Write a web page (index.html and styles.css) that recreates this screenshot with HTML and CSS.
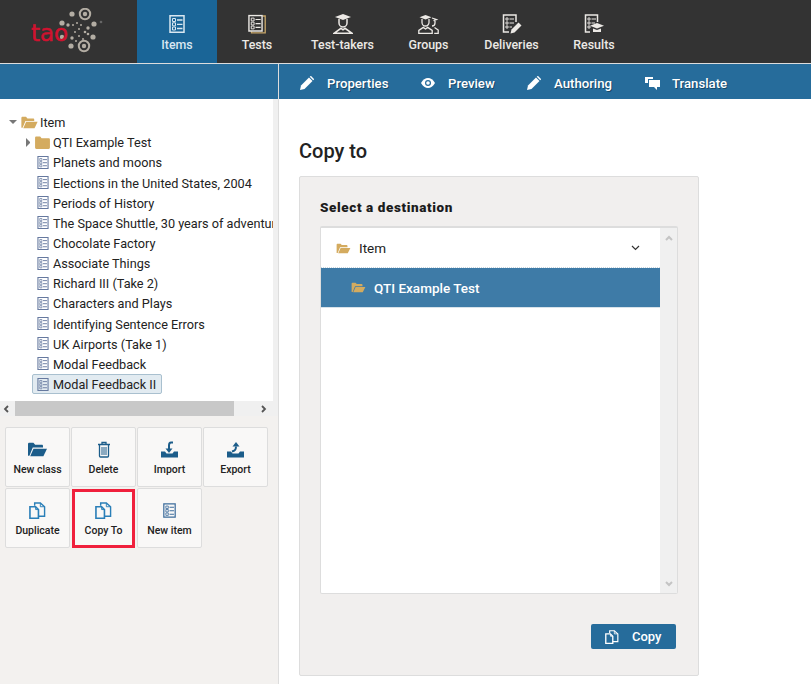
FILE: index.html
```html
<!DOCTYPE html>
<html>
<head>
    <meta charset="UTF-8">
    <meta name="viewport" content="width=device-width, initial-scale=1.0">
    <title>TAO - Copy to</title>
    <link rel="stylesheet" href="styles.css">
</head>
<body>
    <svg class="defs" width="0" height="0">
        <symbol id="i-item" viewBox="0 0 16 18">
            <path d="M1 .8h14v16.400H1z" fill="none" stroke="currentColor" stroke-width="1.500"/>
            <path d="M3.500 3.500h3v3h-3zM3.500 7.800h3v3h-3zM3.500 12h3v3h-3z" fill="none" stroke="currentColor"/>
            <path d="M8 5h5.500M8 9.300h5.500M8 13.500h5.500" stroke="currentColor" stroke-width="1.300"/>
        </symbol>
        <symbol id="i-open" viewBox="0 0 20 16">
            <path d="M0 2.500C0 1.500.7 1 1.500 1h4.200l1.800 2h7c.8 0 1.300.5 1.300 1.300V6H5L1.500 14.500H0z" fill="currentColor"/>
            <path d="M5.800 7.200H20l-3.800 7.800H2.300z" fill="currentColor"/>
        </symbol>
        <symbol id="i-folder" viewBox="0 0 16 14">
            <path d="M0 2c0-1 .6-1.500 1.500-1.500h4L7 2.500h7.500c1 0 1.500.5 1.500 1.500v8.500c0 1-.5 1.500-1.500 1.500h-13C.5 14 0 13.500 0 12.500z" fill="currentColor"/>
        </symbol>
        <symbol id="i-copy" viewBox="0 0 18 18">
            <path d="M1 5h6l3 3v9.200H1z" fill="none" stroke="currentColor" stroke-width="1.700"/>
            <path d="M7 5v3h3" fill="none" stroke="currentColor"/>
            <path d="M6 4V1h6l4.500 4v10H10" fill="none" stroke="currentColor" stroke-width="1.500"/>
            <path d="M12 1v4h4" fill="none" stroke="currentColor"/>
        </symbol>
        <symbol id="i-pencil" viewBox="0 0 14 14">
            <path d="M0 14l1-4.500L9 1.500l3.500 3.500L4.500 13z" fill="currentColor"/>
            <path d="M10.300.3l3.400 3.400" stroke="currentColor" stroke-width="1.500"/>
        </symbol>
    </svg>

    <header class="topbar">
        <a class="logo">
            <svg width="84" height="50" viewBox="0 0 84 50">
                <g fill="#b3ada3">
                    <circle cx="45" cy="6" r="2.600"/>
                    <circle cx="35" cy="15" r="2.600"/>
                    <circle cx="67" cy="16" r="2.600"/>
                    <circle cx="66" cy="29" r="2.600"/>
                    <circle cx="44" cy="38" r="2.600"/>
                    <circle cx="41" cy="17" r="1.700"/>
                    <circle cx="45" cy="30" r="1.700"/>
                    <circle cx="61" cy="20" r="1.700"/>
                    <circle cx="58" cy="24" r="1.300"/>
                    <circle cx="61" cy="26" r="1.300"/>
                    <circle cx="35" cy="29" r="2.200"/>
                    <circle cx="46" cy="17" r="1"/>
                    <circle cx="50" cy="15" r="1"/>
                    <circle cx="54" cy="17" r="1"/>
                    <circle cx="48" cy="24" r="1"/>
                    <circle cx="52" cy="21" r="1"/>
                    <circle cx="52" cy="28" r="1"/>
                    <circle cx="56" cy="31" r="1"/>
                    <circle cx="49" cy="33" r="1"/>
                    <circle cx="74" cy="14" r="1.300" fill="#666"/>
                </g>
                <g fill="none" stroke="#b3ada3" stroke-width="2">
                    <circle cx="58" cy="6" r="5.200"/>
                    <circle cx="57" cy="38" r="5.200"/>
                </g>
                <circle cx="58" cy="6" r="2.200" fill="#b3ada3"/>
                <circle cx="57" cy="38" r="2.200" fill="#b3ada3"/>
            </svg>
            <span class="logo-text">tao</span>
        </a>
        <nav class="main-nav">
            <a class="nav-tab active tab-items">
                <svg width="16" height="20" viewBox="0 0 16 18"><use href="#i-item"/></svg>
                <span>Items</span>
            </a>
            <a class="nav-tab tab-tests">
                <svg width="18" height="20" viewBox="0 0 18 19"><path d="M14.500 1.500H17.200V18.300H3.500v-1.500" fill="none" stroke="#c9a86a" stroke-width="1.300"/><use href="#i-item" width="15" height="17.500"/></svg>
                <span>Tests</span>
            </a>
            <a class="nav-tab tab-takers">
                <svg width="20" height="20" viewBox="0 0 20 20"><path d="M10 0l8 3-8 3-8-3z" fill="currentColor"/><path d="M6 5v4a4 4 0 0 0 8 0V5" fill="none" stroke="currentColor" stroke-width="1.500"/><path d="M1 19.300l7-5 2 1.500 2-1.500 7 5z" fill="none" stroke="currentColor" stroke-width="1.500"/></svg>
                <span>Test-takers</span>
            </a>
            <a class="nav-tab tab-groups">
                <svg width="21" height="20" viewBox="0 0 21 20"><path d="M7.500 1l6 2.300-6 2.300-6-2.300z" fill="currentColor"/><path d="M4 5v3.500a3.500 3.500 0 0 0 7 0V5" fill="none" stroke="currentColor" stroke-width="1.300"/><path d="M.8 19.400v-3l4.500-3 2.200 1.600 2.200-1.600 4.500 3v3z" fill="none" stroke="currentColor" stroke-width="1.300"/><path d="M14 4l4.500 1.500-3 1.200M17 7v2a3 3 0 0 1-3 3M16.500 13.500l3.700 2.500v3.400h-4" fill="none" stroke="currentColor" stroke-width="1.300"/></svg>
                <span>Groups</span>
            </a>
            <a class="nav-tab tab-deliveries">
                <svg width="20" height="20" viewBox="0 0 20 20"><path d="M14 8V1H1.500v17H7" fill="none" stroke="currentColor" stroke-width="1.500"/><path d="M4 4h2v2H4zM4 8h2v2H4zM4 12h2v2H4z" fill="none" stroke="currentColor" stroke-width=".9"/><path d="M7.500 5H12M7.500 9H12M7.500 13H10" stroke="currentColor"/><path d="M8.500 19.500l1-4 7-7 3 3-7 7z" fill="currentColor"/></svg>
                <span>Deliveries</span>
            </a>
            <a class="nav-tab tab-results">
                <svg width="20" height="20" viewBox="0 0 20 20"><path d="M13.500 8V1H1.500v17H6" fill="none" stroke="currentColor" stroke-width="1.500"/><path d="M4 4h2v2H4zM4 8h2v2H4zM4 12h2v2H4z" fill="none" stroke="currentColor" stroke-width=".9"/><path d="M7.500 5H12M7.500 9H11" stroke="currentColor"/><path d="M13 9l7 2.800-7 2.800-7-2.800z" fill="currentColor"/><path d="M9 14.500v3.500h8v-3.500l-4 1.500z" fill="currentColor"/></svg>
                <span>Results</span>
            </a>
        </nav>
    </header>

    <div class="action-bar">
        <div class="action-spacer"></div>
        <nav class="action-tabs">
            <a class="action-tab tab-properties"><svg width="14" height="14"><use href="#i-pencil"/></svg><span>Properties</span></a>
            <a class="action-tab tab-preview">
                <svg width="14" height="10" viewBox="0 0 14 10"><path d="M0 5c2-3.200 4.300-5 7-5s5 1.800 7 5c-2 3.200-4.300 5-7 5S2 8.200 0 5z" fill="currentColor"/><circle cx="7" cy="5" r="3" fill="#266c9b"/><circle cx="7" cy="5" r="1.800" fill="currentColor"/></svg>
                <span>Preview</span>
            </a>
            <a class="action-tab tab-authoring"><svg width="14" height="14"><use href="#i-pencil"/></svg><span>Authoring</span></a>
            <a class="action-tab tab-translate">
                <svg width="15" height="13" viewBox="0 0 15 13"><path d="M0 0h8v2H3v4H0z" fill="currentColor"/><path d="M4 3h11v7h-3v3l-3-3H4z" fill="currentColor"/></svg>
                <span>Translate</span>
            </a>
        </nav>
    </div>

    <div class="workspace">
        <aside class="sidebar">
            <div class="tree-wrap">
                <ul class="tree">
                    <li class="tree-row root">
                        <span class="caret caret-down"></span>
                        <svg class="folder-open" width="17" height="13"><use href="#i-open"/></svg>
                        <span>Item</span>
                    </li>
                    <li class="tree-row sub">
                        <span class="caret caret-right"></span>
                        <svg class="folder" width="15" height="13"><use href="#i-folder"/></svg>
                        <span>QTI Example Test</span>
                    </li>
                    <li class="tree-row leaf"><svg class="item-icon" width="12" height="13"><use href="#i-item"/></svg><span>Planets and moons</span></li>
                    <li class="tree-row leaf"><svg class="item-icon" width="12" height="13"><use href="#i-item"/></svg><span>Elections in the United States, 2004</span></li>
                    <li class="tree-row leaf"><svg class="item-icon" width="12" height="13"><use href="#i-item"/></svg><span>Periods of History</span></li>
                    <li class="tree-row leaf"><svg class="item-icon" width="12" height="13"><use href="#i-item"/></svg><span>The Space Shuttle, 30 years of adventure</span></li>
                    <li class="tree-row leaf"><svg class="item-icon" width="12" height="13"><use href="#i-item"/></svg><span>Chocolate Factory</span></li>
                    <li class="tree-row leaf"><svg class="item-icon" width="12" height="13"><use href="#i-item"/></svg><span>Associate Things</span></li>
                    <li class="tree-row leaf"><svg class="item-icon" width="12" height="13"><use href="#i-item"/></svg><span>Richard III (Take 2)</span></li>
                    <li class="tree-row leaf"><svg class="item-icon" width="12" height="13"><use href="#i-item"/></svg><span>Characters and Plays</span></li>
                    <li class="tree-row leaf"><svg class="item-icon" width="12" height="13"><use href="#i-item"/></svg><span>Identifying Sentence Errors</span></li>
                    <li class="tree-row leaf"><svg class="item-icon" width="12" height="13"><use href="#i-item"/></svg><span>UK Airports (Take 1)</span></li>
                    <li class="tree-row leaf"><svg class="item-icon" width="12" height="13"><use href="#i-item"/></svg><span>Modal Feedback</span></li>
                    <li class="tree-row leaf selected"><svg class="item-icon" width="12" height="13"><use href="#i-item"/></svg><span>Modal Feedback II</span></li>
                </ul>
                <div class="v-scroll"></div>
            </div>
            <div class="h-scroll">
                <svg width="6" height="8" viewBox="0 0 6 8"><path d="M5 1L2 4l3 3" fill="none" stroke="#555" stroke-width="1.800"/></svg>
                <div class="h-thumb"></div>
                <svg width="6" height="8" viewBox="0 0 6 8"><path d="M1 1l3 3-3 3" fill="none" stroke="#555" stroke-width="1.800"/></svg>
            </div>
            <div class="tool-grid">
                <button class="tool-btn">
                    <svg width="19" height="15" class="tool-dark"><use href="#i-open"/></svg>
                    <span>New class</span>
                </button>
                <button class="tool-btn">
                    <svg width="14" height="16" viewBox="0 0 14 16" class="tool-dark"><path d="M1 3h12M5 3V1h4v2M2.500 3v11.500a1 1 0 0 0 1 1h7a1 1 0 0 0 1-1V3" fill="none" stroke="currentColor" stroke-width="1.300"/><path d="M5 5.500v8M7 5.500v8M9 5.500v8" stroke="currentColor"/></svg>
                    <span>Delete</span>
                </button>
                <button class="tool-btn">
                    <svg width="17" height="16" viewBox="0 0 17 16" class="tool-dark"><path d="M0 10h4l1.500 2h6L13 10h4v6H0z" fill="currentColor"/><path d="M12 1H10C8.500 1 8 2 8 4v4" fill="none" stroke="currentColor" stroke-width="2"/><path d="M4.500 7h7L8 11.500z" fill="currentColor"/></svg>
                    <span>Import</span>
                </button>
                <button class="tool-btn">
                    <svg width="17" height="16" viewBox="0 0 17 16" class="tool-dark"><path d="M0 10h4l1.500 2h6L13 10h4v6H0z" fill="currentColor"/><path d="M5 10c2-.5 4-1 4-5" fill="none" stroke="currentColor" stroke-width="2"/><path d="M5.500 5h7L9 .5z" fill="currentColor"/></svg>
                    <span>Export</span>
                </button>
                <button class="tool-btn">
                    <svg width="17" height="17" class="tool-blue"><use href="#i-copy"/></svg>
                    <span>Duplicate</span>
                </button>
                <button class="tool-btn marked">
                    <svg width="17" height="17" class="tool-blue"><use href="#i-copy"/></svg>
                    <span>Copy To</span>
                </button>
                <button class="tool-btn">
                    <svg width="13" height="15" class="tool-slate"><use href="#i-item"/></svg>
                    <span>New item</span>
                </button>
            </div>
        </aside>

        <main class="content">
            <h1>Copy to</h1>
            <section class="panel">
                <h2>Select a destination</h2>
                <div class="dest-box">
                    <div class="dest-list">
                        <div class="dest-row">
                            <svg class="folder-open" width="15" height="11"><use href="#i-open"/></svg>
                            <span>Item</span>
                            <svg class="chevron" width="9" height="6" viewBox="0 0 9 6"><path d="M1 1l3.500 3.500L8 1" fill="none" stroke="#333" stroke-width="1.200"/></svg>
                        </div>
                        <div class="dest-row child">
                            <svg class="folder-open" width="15" height="11"><use href="#i-open"/></svg>
                            <span>QTI Example Test</span>
                        </div>
                    </div>
                    <div class="dest-scroll">
                        <svg width="8" height="6" viewBox="0 0 8 6"><path d="M1 5l3-3 3 3" fill="none" stroke="#c4c4c4" stroke-width="2"/></svg>
                        <svg width="8" height="6" viewBox="0 0 8 6"><path d="M1 1l3 3 3-3" fill="none" stroke="#c4c4c4" stroke-width="2"/></svg>
                    </div>
                </div>
                <div class="panel-foot">
                    <button class="copy-btn">
                        <svg width="14" height="14"><use href="#i-copy"/></svg>
                        <span>Copy</span>
                    </button>
                </div>
            </section>
        </main>
    </div>
</body>
</html>
```

FILE: styles.css
```css
* {
    box-sizing: border-box;
}

html, body {
    height: 100%;
}

body {
    margin: 0;
    height: 684px;
    overflow: hidden;
    font-family: Roboto, "Liberation Sans", Arial, sans-serif;
    color: #222;
    background-color: #fff;
}

.defs {
    display: block;
    height: 0;
}

/* top navigation */
.topbar {
    display: flex;
    height: 64px;
    background-color: #333;
    border-bottom: 1px solid #ddd;
}

.logo {
    position: relative;
    width: 137px;
    padding: 8px 0 0 27px;
}

.logo svg {
    display: block;
}

.logo-text {
    position: absolute;
    left: 31px;
    top: 18px;
    font-family: "DejaVu Sans", sans-serif;
    font-size: 23px;
    line-height: 30px;
    color: #d0122f;
    -webkit-text-stroke: .5px #d0122f;
}

.main-nav {
    display: flex;
}

.nav-tab {
    display: flex;
    flex-direction: column;
    align-items: center;
    height: 63px;
    padding-top: 14px;
    color: #ece9e5;
    font-size: 12.400px;
    font-weight: 500;
}

.nav-tab svg {
    display: block;
    height: 20px;
}

.nav-tab span {
    margin-top: 3px;
    line-height: 16px;
}

.nav-tab.active {
    background-color: #1a6597;
    color: #d9e7f1;
}

.tab-items { width: 80px; }
.tab-tests { width: 80px; }
.tab-takers { width: 91px; }
.tab-groups { width: 81px; }
.tab-deliveries { width: 85px; }
.tab-results { width: 80px; }

/* secondary actions */
.action-bar {
    display: flex;
    height: 35px;
    background-color: #266c9b;
}

.action-spacer {
    width: 279px;
    border-right: 1px solid #ddd;
}

.action-tabs {
    display: flex;
    padding-left: 21px;
}

.action-tab {
    display: flex;
    align-items: center;
    padding-top: 3px;
    color: #fff;
    font-size: 13.200px;
    font-weight: 500;
    text-shadow: 1px 1px 0 rgba(0, 0, 0, .35);
}

.action-tab svg {
    flex: none;
}

.tab-properties { width: 121px; }
.tab-properties svg { margin-right: 13px; }
.tab-preview { width: 106px; }
.tab-preview svg { margin-right: 13px; }
.tab-authoring { width: 118px; }
.tab-authoring svg { margin-right: 13px; }
.tab-translate svg { margin-right: 12px; }

/* main area */
.workspace {
    display: flex;
    height: 585px;
}

.sidebar {
    flex: none;
    width: 279px;
    background-color: #f3f1ef;
    border-right: 1px solid #ddd;
}

.tree-wrap {
    display: flex;
    height: 302px;
    background-color: #fff;
}

.tree {
    flex: 1;
    min-width: 0;
    margin: 0;
    padding: 13px 0 0;
    list-style: none;
    overflow: hidden;
}

.v-scroll {
    flex: none;
    width: 5px;
    background-color: #f0f0f0;
}

.tree-row {
    display: flex;
    align-items: center;
    height: 20.170px;
    font-size: 12.700px;
    white-space: nowrap;
}

.tree-row span {
    padding-top: 1px;
}

.root {
    padding-left: 9px;
}

.root span:last-child {
    margin-left: 2px;
}

.sub {
    padding-left: 26px;
}

.sub svg {
    margin: 0 3px 0 5px;
}

.leaf {
    padding-left: 37px;
}

.leaf svg {
    margin-right: 4px;
    flex: none;
}

.selected {
    width: 130px;
    margin-left: 32px;
    padding-left: 4px;
    background-color: #e2ebf1;
    border: 1px solid #a9c0cf;
    border-radius: 2px;
}

.caret {
    display: block;
    padding: 0;
    width: 0;
    height: 0;
    border-style: solid;
    border-color: transparent;
}

.caret-down {
    margin-right: 4px;
    border-width: 4px 4px 0;
    border-top-color: #777;
}

.caret-right {
    border-width: 4px 0 4px 4px;
    border-left-color: #777;
}

.folder-open, .folder {
    color: #d4ab5f;
    flex: none;
}

.item-icon {
    color: #66799f;
}

.h-scroll {
    display: flex;
    align-items: center;
    height: 15px;
    padding: 0 10px 0 3px;
    background-color: #f0f0f0;
}

.h-thumb {
    width: 219px;
    height: 15px;
    margin: 0 27px 0 6px;
    background-color: #c8c8c8;
}

.tool-grid {
    display: grid;
    grid-template-columns: repeat(4, 65px);
    grid-auto-rows: 60px;
    gap: 1px;
    padding: 11px 0 0 5px;
}

.tool-btn {
    display: flex;
    flex-direction: column;
    align-items: center;
    padding: 13px 0 0;
    background-color: #f9f8f7;
    border: 1px solid #ddd;
    border-radius: 2px;
    font-family: inherit;
    font-size: 10.500px;
    font-weight: 500;
    color: #222;
}

.tool-btn svg {
    display: block;
    height: 17px;
}

.tool-btn span {
    margin-top: 5px;
    line-height: 14px;
}

.tool-btn.marked {
    padding-top: 10px;
    border: 3px solid #f0203c;
    border-radius: 0;
    margin: 1px 1px 0;
}

.tool-dark { color: #1c5d8a; }
.tool-blue { color: #2a7fb8; }
.tool-slate { color: #3d6c9c; }

/* copy panel */
.content {
    flex: 1;
    padding: 40px 0 0 20px;
}

.content h1 {
    margin: 0;
    font-size: 20px;
    font-weight: 500;
    line-height: 24px;
    color: #222;
}

.panel {
    width: 400px;
    height: 500px;
    margin-top: 13px;
    padding: 20px 21px 0 20px;
    background-color: #f1efee;
    border: 1px solid #ddd;
    border-radius: 2px;
}

.panel h2 {
    margin: 0 0 9px;
    font-size: 13.500px;
    font-weight: 900;
    line-height: 20px;
    letter-spacing: .6px;
    color: #1c1c1c;
}

.dest-box {
    display: flex;
    width: 358px;
    height: 368px;
    background-color: #fff;
    border: 1px solid #ddd;
    border-top-width: 2px;
    border-radius: 2px;
}

.dest-list {
    flex: 1;
    padding-top: 1px;
}

.dest-row {
    display: flex;
    align-items: center;
    height: 39px;
    padding-left: 15px;
    font-size: 13.500px;
    border-bottom: 1px dotted #c8d6e0;
}

.dest-row span {
    margin-left: 8px;
}

.chevron {
    margin-left: auto;
    margin-right: 20px;
}

.dest-row.child {
    height: 40px;
    padding-left: 30px;
    background-color: #3e7ba7;
    border-bottom: 1px solid #d7e2ea;
    color: #fff;
    font-weight: 500;
}

.dest-scroll {
    display: flex;
    flex-direction: column;
    align-items: center;
    justify-content: space-between;
    flex: none;
    width: 17px;
    padding: 7px 0 6px;
    background-color: #f0f0f0;
}

.panel-foot {
    display: flex;
    justify-content: flex-end;
    margin: 30px 1px 0 0;
}

.copy-btn {
    display: flex;
    align-items: center;
    width: 85px;
    height: 25px;
    padding: 0 0 0 14px;
    background-color: #266c9b;
    border: none;
    border-radius: 2px;
    font-family: inherit;
    font-size: 13px;
    font-weight: 500;
    color: #fff;
}

.copy-btn span {
    margin-left: 13px;
}
```
